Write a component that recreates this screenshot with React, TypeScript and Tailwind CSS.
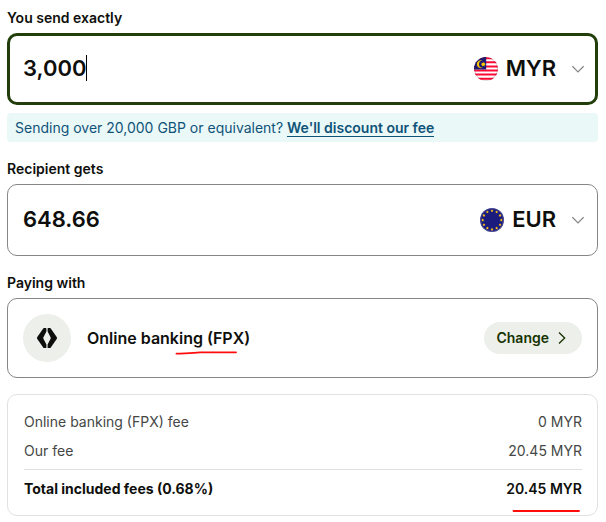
import { useState } from 'react';

const CURRENCIES = ['MYR', 'EUR', 'GBP', 'USD'];

const FEES = [
  { label: 'Online banking (FPX) fee', value: '0 MYR' },
  { label: 'Our fee', value: '20.45 MYR' },
];

function MalaysiaFlag() {
  return (
    <svg className="w-6 h-6 shrink-0" viewBox="0 0 24 24" aria-hidden="true">
      <clipPath id="my-clip">
        <circle cx="12" cy="12" r="12" />
      </clipPath>
      <g clipPath="url(#my-clip)">
        <path fill="#fff" d="M0 0h24v24H0z" />
        <path fill="#ff0a36" d="M0 .2h24v2H0zM0 4.300h24v2H0zM0 8.400h24v2H0zM0 12.500h24v2H0zM0 16.600h24v2H0zM0 20.700h24v2H0z" />
        <path fill="#201c72" d="M0 0h12.200v12.400H0z" />
        <path fill="#ffc800" d="M8.600 3.600a4 4 0 1 0 0 7.200a3.300 3.300 0 1 1 0-7.200z" />
        <path fill="#ffc800" d="M9.300 5l.6 1.100 1.300-.3-.5 1.200.9.8-1.200.4.100 1.300-1.200-.7-1.200.7.100-1.300L7 7.800l.9-.8-.5-1.200 1.300.3z" />
      </g>
      <circle cx="12" cy="12" r="11.500" fill="none" stroke="#000" strokeOpacity="0.14" />
    </svg>
  );
}

function EuropeFlag() {
  const stars = Array.from({ length: 12 }, (_, i) => (i * Math.PI) / 6);
  return (
    <svg className="w-6 h-6 shrink-0" viewBox="0 0 24 24" aria-hidden="true">
      <circle cx="12" cy="12" r="12" fill="#1b1a7d" />
      {stars.map((angle) => (
        <path
          key={angle}
          fill="#ffcc1a"
          transform={`translate(${12 + 9.3 * Math.sin(angle)} ${12 - 9.3 * Math.cos(angle)})`}
          d="M0-1.500L.5-.5 1.500-.4.700.4 1 1.400 0 .9-1 1.400-.7.4-1.500-.4-.5-.5z"
        />
      ))}
      <circle cx="12" cy="12" r="11.500" fill="none" stroke="#fff" strokeOpacity="0.2" />
    </svg>
  );
}

function ChevronDown() {
  return (
    <svg className="w-3 h-2 ml-4 shrink-0" viewBox="0 0 12 8" fill="none" stroke="#868685" strokeWidth="1.200" aria-hidden="true">
      <path d="M.4 1.200L6 6.800l5.600-5.600" />
    </svg>
  );
}

interface AmountFieldProps {
  id: string;
  label: string;
  amount: string;
  currency: string;
  active?: boolean;
}

function AmountField({ id, label, amount, currency, active }: AmountFieldProps) {
  const [value, setValue] = useState(amount);
  const [selected, setSelected] = useState(currency);

  return (
    <div>
      <label htmlFor={id} className="block mb-1 text-sm leading-[22px] font-semibold">
        {label}
      </label>
      <div
        className={`flex items-center h-[72px] rounded-[10px] ${
          active ? 'border-3 border-[#213e0b] pl-[13px] pr-[11px]' : 'border border-[#868685] pl-[15px] pr-[13px]'
        }`}
      >
        <input
          id={id}
          value={value}
          onChange={(e) => setValue(e.target.value)}
          className="field-sizing-content pb-0.5 text-[22px] leading-7 font-semibold outline-none caret-transparent"
        />
        {active && <span className="w-px h-[26px] mb-0.5 bg-black" />}
        <div className="flex items-center ml-auto">
          {selected === 'EUR' ? <EuropeFlag /> : <MalaysiaFlag />}
          <select
            aria-label={`${label} currency`}
            value={selected}
            onChange={(e) => setSelected(e.target.value)}
            className="field-sizing-content appearance-none ml-2 pb-0.5 text-[22px] leading-7 font-semibold outline-none"
          >
            {CURRENCIES.map((code) => (
              <option key={code}>{code}</option>
            ))}
          </select>
          <ChevronDown />
        </div>
      </div>
    </div>
  );
}

export default function App() {
  return (
    <main className="flex flex-col gap-4 p-[7px] pr-2 bg-white text-[#0e0f0c] font-['Inter',sans-serif]">
      <div className="flex flex-col gap-2">
        <AmountField id="send" label="You send exactly" amount="3,000" currency="MYR" active />
        <p className="px-2 pt-1 pb-[3px] rounded-sm bg-[#eaf8f8] text-sm leading-[22px] text-[#0f5378]">
          Sending over 20,000 GBP or equivalent?{' '}
          <a href="#discount" className="font-semibold border-b border-current">
            We'll discount our fee
          </a>
        </p>
      </div>

      <AmountField id="receive" label="Recipient gets" amount="648.66" currency="EUR" />

      <section>
        <h2 className="mb-1 text-sm leading-[22px] font-semibold">Paying with</h2>
        <div className="flex items-center h-20 px-[15px] border border-[#868685] rounded-[10px]">
          <span className="flex items-center justify-center w-12 h-12 rounded-full bg-[#edefeb]">
            <svg className="w-5 h-5" viewBox="0 0 20 20" fill="#0e0f0c" aria-hidden="true">
              <path d="M9.400.6v3L6.300 9.600v.8l3.100 6v3q0 .6-.6.600H7q-.5 0-.8-.5L.3 11q-.6-1 0-2L6.200.5Q6.500 0 7 0h1.800q.6 0 .6.600z" />
              <path d="M10.600.6v3l3.100 6v.8l-3.100 6v3q0 .6.6.600H13q.5 0 .8-.5L19.700 11q.6-1 0-2L13.800.5Q13.500 0 13 0h-1.800q-.6 0-.6.600z" />
            </svg>
          </span>
          <span className="relative ml-4 text-base leading-6 font-semibold">
            Online banking (FPX)
            <svg className="absolute left-[88px] top-[25px] w-16 h-1" viewBox="0 0 64 4" fill="none" aria-hidden="true">
              <path d="M1.500 2.700C9 2.200 17 2.200 25 1.300H61" stroke="#ff0d0d" strokeWidth="1.800" strokeLinecap="round" />
            </svg>
          </span>
          <button className="flex items-center h-8 ml-auto px-3 rounded-full bg-[#edefeb] text-sm font-semibold text-[#163300]">
            Change
            <svg className="w-4 h-4 ml-[5px]" viewBox="0 0 16 16" fill="none" stroke="currentColor" strokeWidth="1.300" aria-hidden="true">
              <path d="M5 2.500L10.700 8 5 13.500" />
            </svg>
          </button>
        </div>
      </section>

      <div className="pl-4 pr-[15px] pt-4 pb-[15px] border border-[#e1e2e0] rounded-[10px]">
        <table className="w-full text-sm leading-[22px]">
          <tbody className="text-[#454745]">
            {FEES.map((fee) => (
              <tr key={fee.label}>
                <th className="pb-[7px] text-left font-normal">{fee.label}</th>
                <td className="pb-[7px] text-right">{fee.value}</td>
              </tr>
            ))}
          </tbody>
          <tfoot className="border-t border-[#dfe0de] font-semibold">
            <tr>
              <th className="pt-2 text-left">Total included fees (0.68%)</th>
              <td className="pt-2 text-right">
                <span className="relative">
                  20.45 MYR
                  <svg className="absolute right-0 top-[29px] w-[70px] h-1" viewBox="0 0 70 4" fill="none" aria-hidden="true">
                    <path d="M1.500 2H67" stroke="#ff0d0d" strokeWidth="1.800" strokeLinecap="round" />
                  </svg>
                </span>
              </td>
            </tr>
          </tfoot>
        </table>
      </div>
    </main>
  );
}
